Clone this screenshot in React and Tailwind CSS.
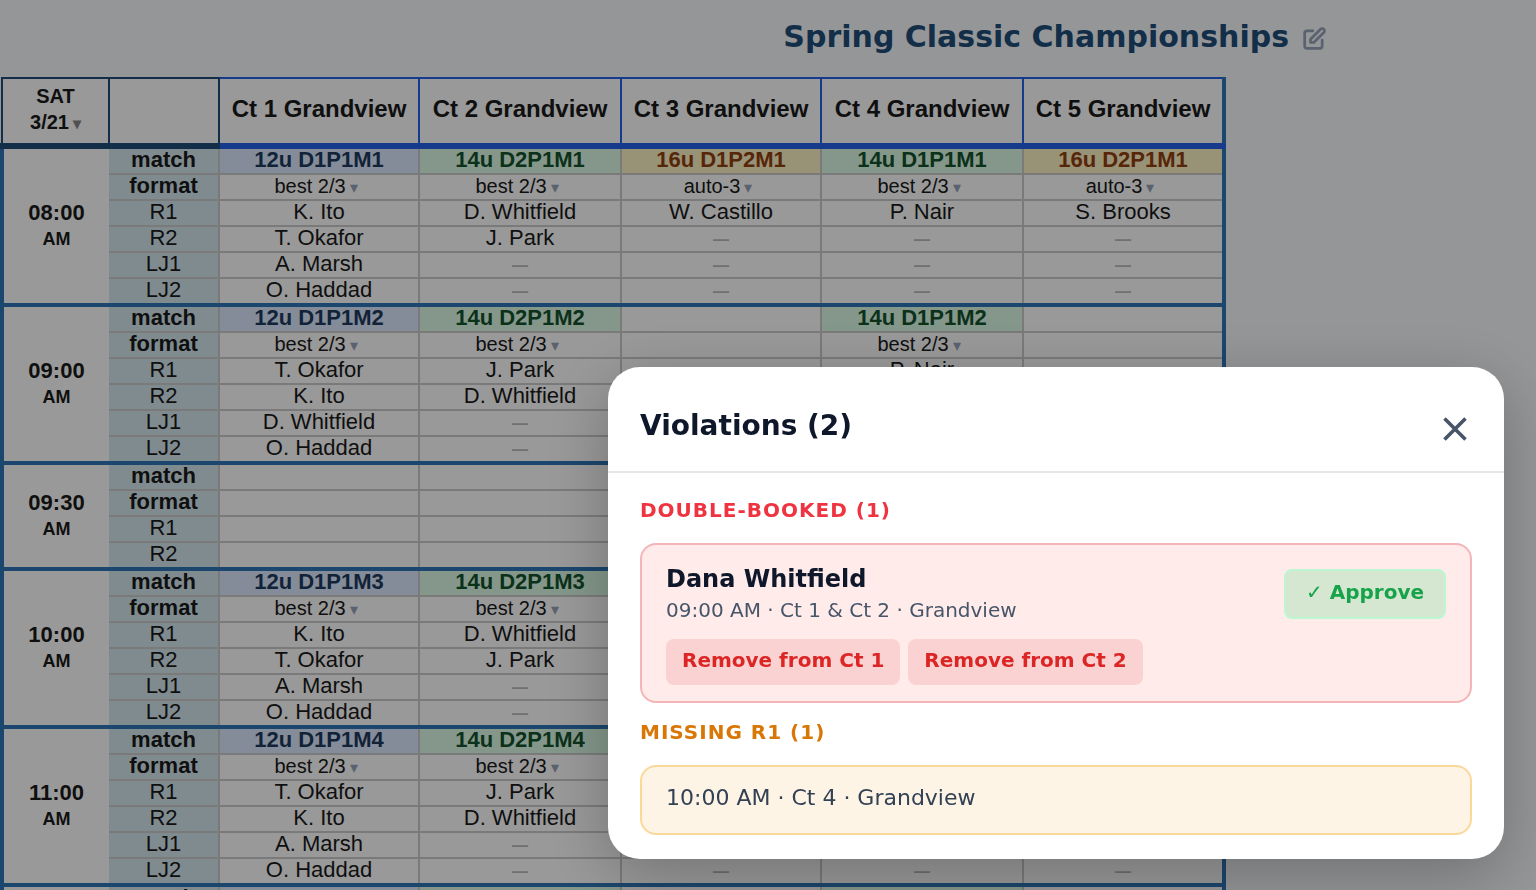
import React, { useState } from "react";
import { clsx } from "clsx";

const courts = [
    { name: "Ct 1 Grandview", width: "w-[200px]" },
    { name: "Ct 2 Grandview", width: "w-[202px]" },
    { name: "Ct 3 Grandview", width: "w-[200px]" },
    { name: "Ct 4 Grandview", width: "w-[202px]" },
    { name: "Ct 5 Grandview", width: "w-[201px]" },
];

const fullRows = ["match", "format", "R1", "R2", "LJ1", "LJ2"];

// each court column: [match, format, R1, R2, LJ1, LJ2], null = no match on that court
const slots = [
    {
        time: "08:00",
        rows: fullRows,
        cells: [
            ["12u D1P1M1", "best 2/3", "K. Ito", "T. Okafor", "A. Marsh", "O. Haddad"],
            ["14u D2P1M1", "best 2/3", "D. Whitfield", "J. Park", "", ""],
            ["16u D1P2M1", "auto-3", "W. Castillo", "", "", ""],
            ["14u D1P1M1", "best 2/3", "P. Nair", "", "", ""],
            ["16u D2P1M1", "auto-3", "S. Brooks", "", "", ""],
        ],
    },
    {
        time: "09:00",
        rows: fullRows,
        cells: [
            ["12u D1P1M2", "best 2/3", "T. Okafor", "K. Ito", "D. Whitfield", "O. Haddad"],
            ["14u D2P1M2", "best 2/3", "J. Park", "D. Whitfield", "", ""],
            null,
            ["14u D1P1M2", "best 2/3", "P. Nair", "", "", ""],
            null,
        ],
    },
    {
        time: "09:30",
        rows: ["match", "format", "R1", "R2"],
        cells: [null, null, null, null, null],
    },
    {
        time: "10:00",
        rows: fullRows,
        cells: [
            ["12u D1P1M3", "best 2/3", "K. Ito", "T. Okafor", "A. Marsh", "O. Haddad"],
            ["14u D2P1M3", "best 2/3", "D. Whitfield", "J. Park", "", ""],
            ["16u D1P2M2", "auto-3", "W. Castillo", "", "", ""],
            ["14u D1P1M3", "best 2/3", "", "", "", ""],
            ["16u D2P1M2", "auto-3", "S. Brooks", "", "", ""],
        ],
    },
    {
        time: "11:00",
        rows: fullRows,
        cells: [
            ["12u D1P1M4", "best 2/3", "T. Okafor", "K. Ito", "A. Marsh", "O. Haddad"],
            ["14u D2P1M4", "best 2/3", "J. Park", "D. Whitfield", "", ""],
            ["16u D1P2M3", "auto-3", "W. Castillo", "", "", ""],
            ["14u D1P1M4", "best 2/3", "P. Nair", "", "", ""],
            ["16u D2P1M3", "auto-3", "S. Brooks", "", "", ""],
        ],
    },
    {
        time: "12:00",
        rows: fullRows,
        cells: [
            ["12u D1P1M5", "best 2/3", "K. Ito", "T. Okafor", "A. Marsh", "O. Haddad"],
            ["14u D2P1M5", "best 2/3", "D. Whitfield", "J. Park", "", ""],
            null,
            ["14u D1P1M5", "best 2/3", "P. Nair", "", "", ""],
            null,
        ],
    },
];

const matchColor = (match) => {
    if (match.startsWith("12u")) return "bg-[#dbeafe] text-[#1e3a5f]";
    if (match.startsWith("14u")) return "bg-[#dcfce7] text-[#14532d]";
    return "bg-[#fef3c7] text-[#92400e]";
};

const CourtCell = ({ row, column, index, last }) => {
    const base = clsx(
        "h-[26px] p-0 pb-0.5 border-2 border-[#ccc] text-center",
        last && "border-b-4 border-b-[#2e75b6]"
    );
    if (!column) return <td className={clsx(base, "bg-white")} />;

    const value = column[index];
    if (row === "match") {
        return <td className={clsx(base, "font-bold", matchColor(value))}>{value}</td>;
    }
    if (row === "format") {
        return (
            <td className={clsx(base, "bg-white")}>
                <button type="button" className="flex h-[22px] w-full items-center justify-center gap-1 text-[20px]">
                    {value}
                    <span className="w-[14px] pt-1 text-left text-[16px] text-[#94a3b8]">▾</span>
                </button>
            </td>
        );
    }
    return (
        <td className={clsx(base, "bg-white")}>
            {value || <span className="block pt-1 text-[16px] leading-[18px] font-bold text-[#bbb]">—</span>}
        </td>
    );
};

const TimeSlot = ({ slot }) => (
    <tbody className="border-x-4 border-[#2e75b6]">
        {slot.rows.map((row, i) => {
            const last = i === slot.rows.length - 1;
            return (
                <tr key={row}>
                    {i === 0 && (
                        <th
                            scope="rowgroup"
                            rowSpan={slot.rows.length}
                            className="p-0 bg-white border-b-4 border-b-[#2e75b6] font-bold leading-[26px]"
                        >
                            {slot.time}
                            <div className="text-[18px]">AM</div>
                        </th>
                    )}
                    <th
                        scope="row"
                        className={clsx(
                            "h-[26px] p-0 pb-0.5 bg-[#d5e8f0] border-y-2 border-r-2 border-[#ccc]",
                            i < 2 ? "font-bold" : "font-normal",
                            last && "border-b-4 border-b-[#2e75b6]"
                        )}
                    >
                        {row}
                    </th>
                    {slot.cells.map((column, c) => (
                        <CourtCell key={c} row={row} column={column} index={i} last={last} />
                    ))}
                </tr>
            );
        })}
    </tbody>
);

const ScheduleTable = () => (
    <table className="w-[1226px] table-fixed border-collapse font-['Liberation_Sans',Arial,sans-serif] text-[22px] leading-[22px] text-[#1a1a1a]">
        <colgroup>
            <col className="w-[107px]" />
            <col className="w-[110px]" />
            {courts.map((court) => (
                <col key={court.name} className={court.width} />
            ))}
        </colgroup>
        <thead className="border-r-4 border-r-[#2e75b6]">
            <tr>
                <th className="h-[68px] p-0 pb-0.5 bg-white border-2 border-b-6 border-[#1f4e79] text-[20px] leading-[26px]">
                    <button type="button" className="font-bold">
                        SAT
                        <br />
                        3/21<span className="ml-1 text-[16px] text-[#888]">▾</span>
                    </button>
                </th>
                <th className="p-0 bg-white border-2 border-b-6 border-[#1f4e79]" />
                {courts.map((court) => (
                    <th key={court.name} scope="col" className="p-0 pb-1 bg-white border-t-2 border-l-2 border-b-6 border-[#2563eb] text-[24px]">
                        {court.name}
                    </th>
                ))}
            </tr>
        </thead>
        {slots.map((slot) => (
            <TimeSlot key={slot.time} slot={slot} />
        ))}
    </table>
);

const ViolationsDialog = ({ onClose }) => (
    <div className="fixed inset-0 z-50 flex items-end justify-end bg-black/40 px-8 pb-[31px]">
        <div
            role="dialog"
            aria-labelledby="violations-title"
            className="w-full max-w-4xl rounded-[32px] bg-white shadow-[0_16px_64px_rgba(0,0,0,0.25)]"
        >
            <div className="flex h-[106px] items-center justify-between border-b-2 border-[#e5e7eb] px-8 pt-3.5">
                <h2 id="violations-title" className="text-[28px] font-bold text-[#0f172a]">
                    Violations (2)
                </h2>
                <button type="button" aria-label="Close" onClick={onClose} className="-mr-px mt-1.5 text-[#475569]">
                    <svg width="36" height="36" viewBox="0 0 24 24" fill="none" stroke="currentColor" strokeWidth="2.4">
                        <path d="M5 19L19 5M5 5l14 14" />
                    </svg>
                </button>
            </div>

            <div className="px-8 pt-5 pb-6">
                <h3 className="text-[20px] leading-[34px] font-bold tracking-wider text-[#ef3340]">DOUBLE-BOOKED (1)</h3>
                <div className="mt-4 rounded-2xl border-2 border-[#f5b5b8] bg-[#feebea] px-6 pt-[18px] pb-4">
                    <div className="flex items-start justify-between">
                        <div>
                            <div className="text-[24px] leading-8 font-bold text-[#0f172a]">Dana Whitfield</div>
                            <div className="text-[20px] leading-[30px] text-[#475569]">09:00 AM · Ct 1 &amp; Ct 2 · Grandview</div>
                        </div>
                        <button
                            type="button"
                            className="mt-1.5 h-[50px] rounded-lg border-2 border-[#bbf7d0] bg-[#d5e6d1] px-5 pb-1 text-[20px] font-bold text-[#16a34a]"
                        >
                            ✓ Approve
                        </button>
                    </div>
                    <div className="mt-3.5 flex gap-2">
                        {["Ct 1", "Ct 2"].map((court) => (
                            <button
                                key={court}
                                type="button"
                                className="h-[46px] rounded-lg bg-[#fad2d2] px-4 pb-1 text-[20px] font-bold text-[#dc2626]"
                            >
                                Remove from {court}
                            </button>
                        ))}
                    </div>
                </div>

                <h3 className="mt-3 text-[20px] leading-[34px] font-bold tracking-wider text-[#d97706]">MISSING R1 (1)</h3>
                <div className="mt-4 rounded-2xl border-2 border-[#fad898] bg-[#fef4e5] px-6 pt-3.5 pb-[18px] text-[22px] leading-[34px] text-[#334155]">
                    10:00 AM · Ct 4 · Grandview
                </div>
            </div>
        </div>
    </div>
);

export default function App() {
    const [dialogOpen, setDialogOpen] = useState(true);

    return (
        <div className="h-screen overflow-hidden bg-[#f8fafc] font-['DejaVu_Sans',sans-serif]">
            <header className="flex h-[77px] items-center justify-end gap-[11px] pr-[208px] pb-1">
                <h1 className="text-[30px] font-bold text-[#1f4e79]">Spring Classic Championships</h1>
                <button type="button" aria-label="Edit title" onClick={() => setDialogOpen(true)} className="pt-1 text-[#94a3b8]">
                    <svg width="28" height="28" viewBox="0 0 24 24" fill="none" stroke="currentColor" strokeWidth="2.3" strokeLinecap="round" strokeLinejoin="round">
                        <path d="M11 5H6a2 2 0 00-2 2v11a2 2 0 002 2h11a2 2 0 002-2v-5m-1.414-9.414a2 2 0 112.828 2.828L11.828 15H9v-2.828l8.586-8.586z" />
                    </svg>
                </button>
            </header>
            <ScheduleTable />
            {dialogOpen && <ViolationsDialog onClose={() => setDialogOpen(false)} />}
        </div>
    );
}
